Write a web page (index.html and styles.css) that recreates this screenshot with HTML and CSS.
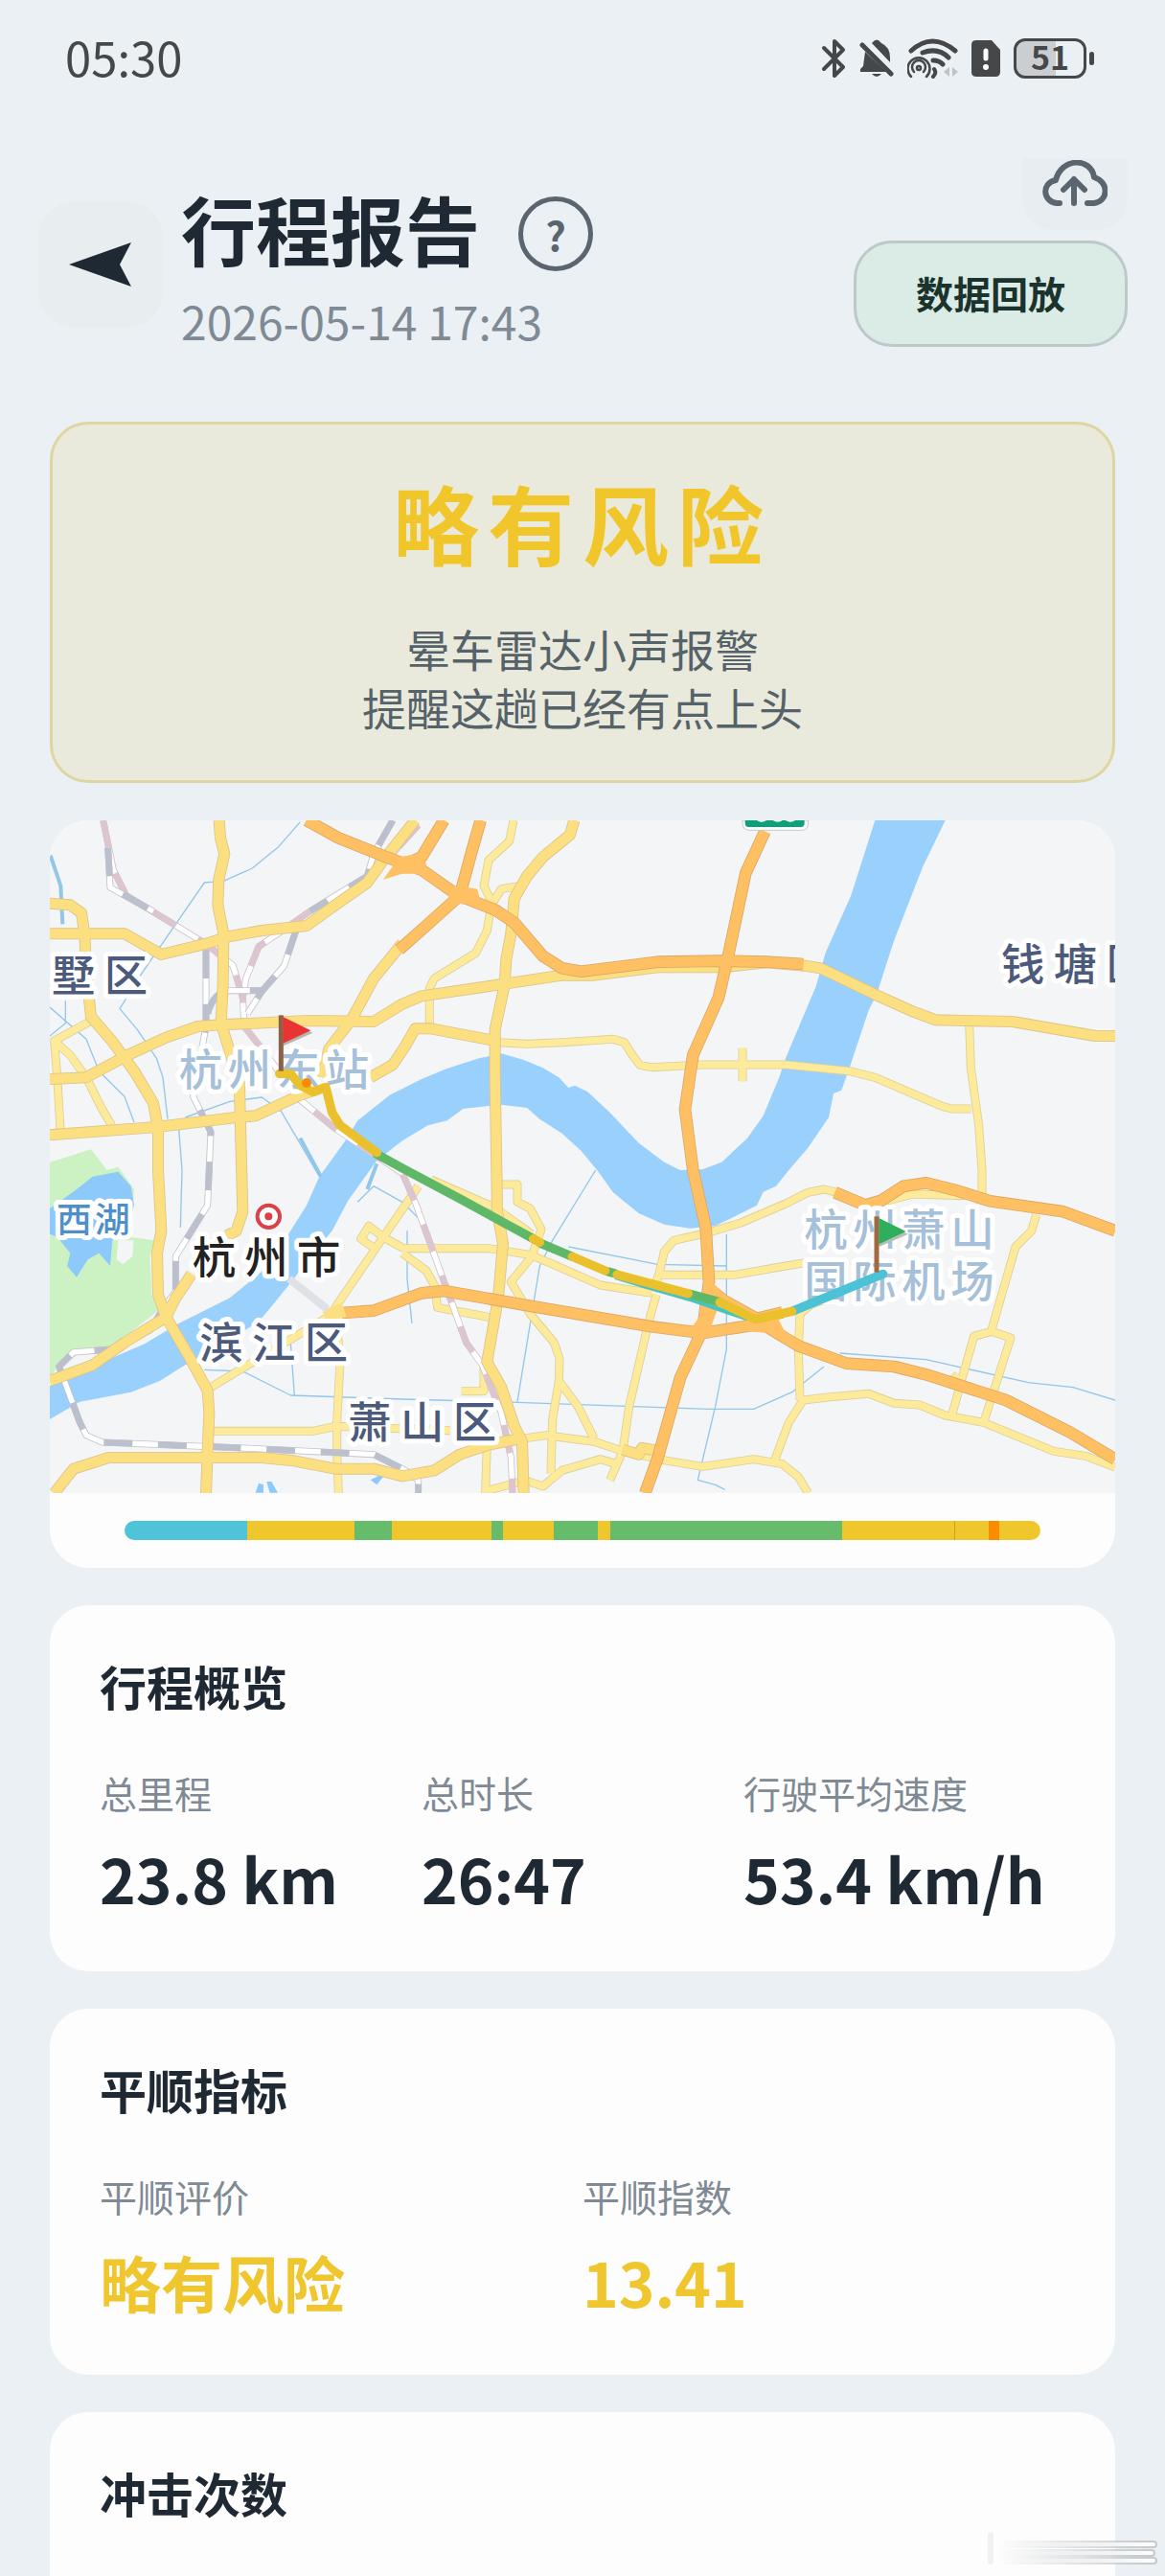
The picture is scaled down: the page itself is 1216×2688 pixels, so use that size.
FILE: index.html
```html
<!DOCTYPE html>
<html lang="zh-CN">
<head>
<meta charset="utf-8">
<meta name="viewport" content="width=device-width, initial-scale=1">
<title>行程报告</title>
<link rel="stylesheet" href="styles.css">
</head>
<body>
<div class="status">
  <span class="status-time">05:30</span>
  <div class="status-icons">
    <svg width="26" height="42" viewBox="0 0 26 42" fill="none" stroke="#454749" stroke-width="4" stroke-linecap="round" stroke-linejoin="round"><path d="M3 10 23 30 14 39V3L23 12 3 32"/></svg>
    <svg width="36" height="42" viewBox="0 0 36 42"><path fill="#454749" d="M13 5 Q18-2 23 5 Q32 9 32 20V25ZM6 14 28 35H1V32L4 29ZM13 37H23Q18 43 13 37Z"/><path d="M3 7 33 37" stroke="#454749" stroke-width="5" stroke-linecap="round"/></svg>
    <svg width="53" height="42" viewBox="0 0 53 42" fill="none" stroke="#454749" stroke-width="5" stroke-linecap="round"><path d="M4 13Q26-7 50 13M16 15Q32 9 43 20M27 23Q33 23 37 27"/><path d="M28 32Q31 36 27 40" stroke-width="4"/><g stroke-width="2.5"><path d="M4 40A11.500 11.500 0 1 1 20 40M7 35A7 7 0 1 1 17 35"/><circle cx="12" cy="31" r="2"/></g><path d="M44 30V40L38 35ZM47 30V40L53 35Z" fill="#bfc3c6" stroke="none"/></svg>
    <svg width="30" height="40" viewBox="0 0 30 40"><path fill="#454749" d="M5 1H21L30 11V34Q30 39 25 39H5Q0 39 0 34V6Q0 1 5 1Z"/><path d="M15 12V20" stroke="#fff" stroke-width="5" stroke-linecap="round"/><circle cx="15" cy="29" r="3" fill="#fff"/></svg>
    <span class="battery"><span class="battery-body">51</span><span class="battery-cap"></span></span>
  </div>
</div>

<header class="header">
  <div class="header-main">
    <button class="back" type="button" aria-label="返回"><svg width="66" height="46" viewBox="0 0 66 46"><path fill="#1f2933" d="M0 23 65 0 53 23 65 46Z"/></svg></button>
    <div class="heading">
      <div class="heading-row">
        <h1>行程报告</h1>
        <button class="help" type="button">?</button>
      </div>
      <time class="date">2026-05-14 17:43</time>
    </div>
  </div>
  <div class="actions">
    <button class="upload" type="button" aria-label="上传"><svg width="68" height="48" viewBox="0 0 68 48" fill="none" stroke="#5a6570" stroke-width="6" stroke-linecap="round" stroke-linejoin="round"><path d="M18 45H15C0 43-1 24 14 21 20-3 51-3 54 18 70 23 69 43 54 45H47M33 45V20M22 31 33 20 44 31"/></svg></button>
    <button class="replay" type="button">数据回放</button>
  </div>
</header>

<main class="content">
  <section class="risk">
    <h2>略有风险</h2>
    <p>晕车雷达小声报警<br>提醒这趟已经有点上头</p>
  </section>

  <section class="trip">
    <svg class="map" viewBox="36 45 3336 2106" role="img" aria-label="行程地图">
      <defs>
        <g id="minor">
          <path d="M1488 45 1475 110 1410 170 1395 250 1420 300 1405 390 1370 460 1240 540 1225 570V690M1510 250 1450 260 1425 300M1440 740 1530 745 1640 740 1800 730 1835 740 1860 780 1885 812 1920 818 2080 810H2340L2540 830 2620 850 2830 940 2860 948H2920M2205 758V862M2915 680 2920 820 2945 1000 2955 1140V1220"/>
          <path d="M170 670 50 735 60 860 70 1030M55 740 100 780 150 850 200 950 230 1000M1190 1190 1080 1350 930 1570 945 1740 935 1930V2020L940 2151M1145 1385 1080 1350 1035 1315 1010 1355 1060 1390M1145 1385H1410L1540 1405 1600 1430 1760 1500 1920 1525M1140 1400 1215 1455 1240 1500 1250 1570 1410 1600"/>
          <path d="M1450 1185H1500V1240L1540 1260 1575 1325 1545 1410 1480 1490 1540 1590 1615 1680 1632 1730 1630 1800 1610 1920 1605 2090M1630 1800 1690 1880 1740 1980M1230 1170 1425 1255 1545 1340M1935 1530 1910 1620 1850 1880 1830 2020 1790 2110"/>
          <path d="M1925 1520 1945 1460 1960 1395 1990 1360 2100 1335 2200 1305 2340 1245 2410 1210 2460 1200 2500 1210M1950 1468H2180L2340 1440 2400 1430M1520 1980 1590 1970 1740 1990 1830 2020 1970 2050 2080 2068 2240 2045 2330 2060 2380 2100 2410 2151M1520 2110 1580 2130 1640 2080 1760 2045 1810 2060"/>
          <path d="M2305 2050 2350 1930 2395 1860 2480 1850 2600 1840 2680 1870 2760 1875 2840 1908 2960 1930 3180 2020 3280 2035 3372 2070M2385 1860 2380 1700 2385 1590 2420 1560 2480 1540M3125 1280 3110 1330 3060 1380 2985 1640M2860 1910 2890 1800 2930 1660 2985 1645 3045 1665 2960 1930M2860 1800 2880 1780M2640 1240 2740 1215 2900 1220"/>
          <path d="M545 1957H860L930 1942 1290 1955M540 1820 790 1670 940 1580M1395 1760V1832H1325M1405 2000 1400 2145 1510 2115"/>
        </g>
        <g id="main">
          <path d="M566 45 570 100 583 150 565 230 562 310 580 400 578 560 572 680 600 770 630 870 632 970 640 1270 620 1330 590 1345M36 400H270L385 465 530 430 590 410 700 390 840 375 930 310 1030 240 1080 170 1180 45"/>
          <path d="M36 305 100 310 135 335 145 400 150 520 165 660 230 735 300 830 360 930 375 1010 375 1140 385 1330 372 1400 375 1530 400 1600 470 1720 530 1830 535 1900 530 2020 525 2151"/>
          <path d="M36 855 150 850 280 780 400 725 500 690 570 685 850 672 1050 675 1140 620 1200 595 1460 557 1640 530H1740L1940 505H2140L2280 490 2400 500 2450 508 2620 590 2730 640 2810 670 3050 675 3310 720H3372"/>
          <path d="M1140 430 1050 540 980 670 910 760 890 850M36 1030 370 1005 620 975 680 970 820 905 880 885M1040 850 1110 810 1150 750 1180 697 1230 697 1430 735M1678 45 1665 90 1580 160 1530 220 1490 290 1480 400 1465 480 1460 560 1430 700 1430 850 1435 1140 1437 1270 1455 1370 1440 1540 1405 1740 1450 1820 1490 1940 1515 1990 1520 2151"/>
          <path d="M50 2151 110 2075 220 2040 700 2040 800 2050 930 2075 1050 2075 1140 2098 1240 2080 1320 2030 1410 2000 1510 1980M36 1800 170 1750 270 1680 400 1600 430 1540 480 1465M1830 2015 1880 2030 1890 2010 1950 2020"/>
        </g>
        <g id="highway">
          <path d="M840 45 940 100 1090 160 1170 190 1200 200 1300 270 1340 290 1430 325 1490 365 1580 470 1640 508 1700 518 1940 488 2140 485 2280 488 2395 495M1270 45 1200 160 1120 195M1385 45 1355 150 1320 280 1220 370 1130 450"/>
          <path d="M2275 80 2215 210 2160 470 2130 600 2050 780 2025 950 2050 1140 2090 1320 2100 1490 2080 1640 2010 1790 1940 2040 1900 2151M950 1587 1050 1580 1200 1525 1270 1518 1540 1565 1920 1630 2080 1650 2240 1625 2280 1630 2380 1690 2530 1745 2680 1755 2780 1780 3030 1860 3230 1960 3372 2045"/>
          <path d="M2495 1210 2590 1250 2640 1235 2710 1190 2780 1180 2880 1205 2980 1237 3210 1270 3372 1330M2100 1510 2150 1550 2250 1605 2330 1585"/>
        </g>
        <g id="rail-a"><path d="M203 45 235 200 275 280 440 380 530 435 610 500 640 600 645 690 700 760 820 920 930 1010 1140 1150 1180 1240 1340 1680 1390 1750 1450 1900 1480 2040 1485 2151M1190 60 1090 170M850 330 750 400 690 440 650 540 640 600"/></g>
        <g id="rail-b"><path d="M218 130 225 255 360 330M525 450V690L485 910 540 1020 530 1250 430 1410 430 1520 400 1560 350 1640 240 1700 110 1710 65 1755 130 1930 150 1970 200 1992 640 2010 1050 2030 1150 2080 1190 2110V2151M1110 45 1050 150 1030 220 850 330M810 380 770 500 700 580 655 650M530 650Q550 580 600 578H700"/></g>
      </defs>
      <rect x="36" y="45" width="3336" height="2106" fill="#f4f5f7"/>
      <path fill="#ccf2c4" d="M36 1115 165 1075 215 1140 250 1130 300 1200 290 1350 365 1360 350 1410 355 1530 375 1580 240 1685 130 1715 60 1755 36 1790Z"/>
      <path fill="#8dc9fb" d="M36 1260 120 1200 170 1160 250 1145 290 1190 300 1250 260 1350 232 1360 225 1440 190 1400 155 1420 120 1475 90 1440 100 1400 60 1350 36 1340ZM680 2150 690 2120 705 2125V2150ZM715 2115 730 2115 750 2150H725ZM1040 2110 1070 2095 1080 2100 1060 2125Z"/>
      <path fill="#f4f5f7" d="M250 1360H298L295 1410 265 1435 245 1420Z"/>
      <path fill="#99d0fc" d="M2620 45 2545 280 2465 460 2435 565 2340 790 2320 850 2270 970 2220 1040 2140 1115 2080 1138 2010 1140 1960 1115 1880 1055 1790 960 1720 895 1680 875 1660 882 1630 850 1580 820 1520 795 1450 775 1380 790 1280 822 1200 855 1100 905 1000 985 960 1050 880 1160 840 1250 790 1330 720 1440 600 1540 440 1620 330 1685 190 1745 36 1815V1920L130 1865 290 1835 380 1800 460 1750 600 1670 690 1615 740 1555 800 1480 870 1390 920 1330 970 1235 1060 1110 1140 1048 1220 1000 1280 985 1330 948 1450 935 1530 945 1570 980 1640 1025 1700 1080 1750 1140 1800 1210 1880 1275 1960 1310 2040 1322 2120 1315 2190 1280 2250 1250 2270 1208 2310 1190 2350 1140 2410 1070 2475 975 2490 900 2515 890 2540 820 2580 700 2600 640 2625 590 2680 420 2750 240 2770 190 2840 45Z"/>
      <g class="streams">
        <path d="M820 50 750 130 670 195 580 235 520 240 430 370 320 530 255 635 310 700 370 790 390 850 405 980M85 610V680L36 720M36 630 150 730 190 830 270 910 300 990M440 1010 450 1140 445 1320M460 975 600 925 700 912 760 955 880 1160M1745 1140 1610 1360 1570 1440 1500 1865"/>
        <path d="M520 1765 640 1770 790 1845 1140 1857 1500 1867 2100 1888 2240 1888 2360 1835 2460 1755M2510 1713 2780 1733 3100 1805 3240 1820 3372 1860M2155 1340V1700L2120 1880 2065 2110 2120 2125 2150 2140M1660 1380 1940 1435 2155 1440M790 1680 802 1845M1155 1330V1480L1170 1620M1050 1190 1140 1240 1190 1290M1050 1190 1000 1240"/>
        <path class="wide" d="M38 155 70 250 76 370M1060 1120 1030 1200M820 1040 885 1160"/>
      </g>
      <g class="lines">
        <use href="#minor" stroke="#ddcf98" stroke-width="27"/><use href="#minor" stroke="#fdea9b" stroke-width="22"/>
        <use href="#rail-a" stroke="#cdc3cc" stroke-width="21"/><use href="#rail-a" stroke="#fff" stroke-width="16"/><use class="dashes" href="#rail-a" stroke="#dcc5ce" stroke-width="20"/>
        <use href="#rail-b" stroke="#c2c3cc" stroke-width="21"/><use href="#rail-b" stroke="#fff" stroke-width="16"/><use class="dashes" href="#rail-b" stroke="#bbc0cc" stroke-width="20"/>
        <use href="#main" stroke="#dcc388" stroke-width="36"/><use href="#main" stroke="#fcdf80" stroke-width="31"/>
        <use href="#highway" stroke="#d9a765" stroke-width="38"/><use href="#highway" stroke="#ffc063" stroke-width="33"/>
      </g>
      <path fill="#ffc063" d="M1080 230 1130 160 1190 150 1215 180 1205 212 1140 212ZM1290 250 1345 255 1375 260 1385 300 1330 308 1285 290ZM2085 1490 2112 1490 2145 1530 2125 1580 2105 1635 2040 1640 2070 1600ZM2215 1600 2310 1592 2345 1660 2290 1650 2215 1645Z"/>
      <path fill="#fcdf80" d="M890 1580 950 1555 965 1600 900 1610Z"/>
      <path stroke="#dfe1e6" stroke-width="24" d="M785 1480 905 1575"/>
      <path d="M2205 45H2410V58Q2408 76 2390 76H2228Q2208 76 2205 58Z" fill="#fff" stroke="#b9cdc8" stroke-width="3"/><path d="M2213 45H2399V54Q2399 66 2387 66H2225Q2213 66 2213 54Z" fill="#0da07a"/><path d="M2250 45Q2265 56 2280 45M2300 45Q2315 56 2330 45M2340 45Q2355 56 2370 45" fill="#fff"/>

      <g class="place">
        <text class="district" x="42" y="583">墅区</text>
        <text class="hub" x="440" y="876">杭州东站</text>
        <text class="district" x="3015" y="545">钱塘区</text>
        <text class="lake" x="57" y="1336">西湖</text>
        <text class="city" x="482" y="1463">杭州市</text>
        <text class="district" x="505" y="1730">滨江区</text>
        <text class="district" x="970" y="1980">萧山区</text>
        <text class="hub" x="2398" y="1378">杭州萧山</text>
        <text class="hub" x="2398" y="1538">国际机场</text>
      </g>
      <circle cx="721" cy="1285" r="35" fill="#fff" stroke="#d9424a" stroke-width="12"/><circle cx="721" cy="1285" r="12" fill="#d9424a"/>

      <g class="route">
        <path stroke="#4bc3bb" stroke-width="14" d="M1810 1476 1900 1504 2040 1544 2215 1604"/>
        <path stroke="#4cc2d6" d="M2360 1582 2645 1465"/>
        <path stroke="#5fb868" d="M1060 1090 1140 1134 1330 1235 1550 1355M1575 1370 1670 1410M1785 1458 1805 1463M2040 1528 2130 1552"/>
        <path stroke="#eac12c" d="M755 838H790L820 875 860 895 900 880 920 960 945 1000 1060 1085M1550 1355 1570 1366M1672 1411 1775 1455M1812 1467 2035 1526M2134 1553 2245 1607 2360 1582"/>
      </g>
      <circle cx="840" cy="867" r="15" fill="#fb8c00"/>
      <path stroke="#8b6148" stroke-width="15" d="M760 655V830"/><path fill="#b9b3ae" d="M768 672 860 710 768 751Z"/><path fill="#ea3434" d="M766 660 853 703 766 743Z"/>
      <path stroke="#a2683f" stroke-width="15" d="M2625 1285V1460"/><path fill="#b3beb4" d="M2634 1302 2724 1340 2634 1379Z"/><path fill="#2fae5b" d="M2632 1290 2717 1332 2632 1372Z"/>
    </svg>
    <div class="timeline">
      <span class="calm" style="flex-grow:128"></span><span class="risky" style="flex-grow:112"></span><span class="good" style="flex-grow:39"></span><span class="risky" style="flex-grow:104"></span><span class="good" style="flex-grow:12"></span><span class="risky" style="flex-grow:53"></span><span class="good" style="flex-grow:46"></span><span class="risky" style="flex-grow:13"></span><span class="good" style="flex-grow:242"></span><span class="risky" style="flex-grow:117"></span><span class="mark" style="flex-grow:1"></span><span class="risky" style="flex-grow:35"></span><span class="bad" style="flex-grow:11"></span><span class="risky" style="flex-grow:43"></span>
    </div>
  </section>

  <section class="card">
    <h2>行程概览</h2>
    <dl class="stats">
      <div><dt>总里程</dt><dd>23.8 km</dd></div>
      <div><dt>总时长</dt><dd>26:47</dd></div>
      <div><dt>行驶平均速度</dt><dd>53.4 km/h</dd></div>
    </dl>
  </section>

  <section class="card">
    <h2>平顺指标</h2>
    <dl class="stats accent">
      <div><dt>平顺评价</dt><dd>略有风险</dd></div>
      <div><dt>平顺指数</dt><dd>13.41</dd></div>
    </dl>
  </section>

  <section class="card last">
    <h2>冲击次数</h2>
  </section>
</main>

<svg class="smear" width="220" height="50" viewBox="0 0 220 50" aria-hidden="true">
  <defs>
    <linearGradient id="fade"><stop offset="0" stop-color="#c4c8cb" stop-opacity="0"/><stop offset="1" stop-color="#c4c8cb"/></linearGradient>
    <linearGradient id="glow"><stop offset="0" stop-color="#fff" stop-opacity="0"/><stop offset="1" stop-color="#fff"/></linearGradient>
  </defs>
  <rect x="39" y="6" width="6" height="34" rx="3" fill="#f0f1f2"/>
  <rect x="50" y="15" width="166" height="8" rx="4" fill="url(#fade)"/><rect x="50" y="24" width="164" height="8" rx="4" fill="url(#fade)"/><rect x="50" y="32" width="166" height="8" rx="4" fill="url(#fade)"/>
  <rect x="50" y="17" width="164" height="4" rx="2" fill="url(#glow)"/><rect x="50" y="26" width="162" height="4" rx="2" fill="url(#glow)"/><rect x="50" y="34" width="164" height="4" rx="2" fill="url(#glow)"/>
</svg>
</body>
</html>
```
FILE: styles.css
```css
* { box-sizing: border-box; }
body {
  margin: 0;
  background: #eaf0f4;
  color: #1f2933;
  font-family: "Noto Sans CJK SC", "Noto Sans", sans-serif;
}
h1, h2, p, dl, dd { margin: 0; }
button { font-family: inherit; padding: 0; border: 0; }
svg { display: block; }

.status {
  display: flex;
  align-items: center;
  justify-content: space-between;
  height: 125px;
  padding: 0 74px 4px 68px;
  color: #454749;
}
.status-time { margin-bottom: 4px; font-size: 49px; line-height: 64px; }
.status-icons { display: flex; align-items: center; gap: 14px; }
.battery { display: flex; align-items: center; gap: 3px; }
.battery-body {
  width: 76px;
  height: 42px;
  border: 3px solid #454749;
  border-radius: 12px;
  background: linear-gradient(90deg, #caced1 58%, transparent 58%);
  font-size: 34px;
  font-weight: 700;
  line-height: 32px;
  text-align: center;
}
.battery-cap { width: 5px; height: 14px; border-radius: 3px; background: #454749; }

.header {
  display: flex;
  justify-content: space-between;
  align-items: flex-start;
  padding: 40px 39px 78px 40px;
}
.header-main { display: flex; align-items: center; gap: 19px; margin-top: 28px; }
.back {
  display: flex;
  align-items: center;
  justify-content: center;
  width: 130px;
  height: 130px;
  border-radius: 36px;
  background: #e8edf0;
}
.heading-row { display: flex; align-items: flex-end; gap: 40px; margin-bottom: 26px; }
h1 { font-size: 78px; line-height: 90px; }
.help {
  width: 78px;
  height: 78px;
  border: 5px solid #5a6570;
  border-radius: 50%;
  background: none;
  color: #5a6570;
  font-size: 42px;
  font-weight: 700;
  line-height: 60px;
}
.date { display: block; color: #7f8a95; font-size: 48px; line-height: 50px; }
.actions { display: flex; flex-direction: column; align-items: flex-end; gap: 11px; }
.upload {
  display: flex;
  justify-content: center;
  width: 110px;
  height: 75px;
  padding-top: 2px;
  border-radius: 0 0 32px 32px;
  background: #e8edf1;
}
.replay {
  width: 286px;
  height: 111px;
  padding-bottom: 4px;
  border: 3px solid #bdc9c9;
  border-radius: 40px;
  background: #dbebe5;
  color: #1a332d;
  font-size: 39px;
  font-weight: 700;
}

.content { display: flex; flex-direction: column; gap: 39px; padding: 0 52px; }
.risk {
  padding: 42px 40px 46px;
  border: 3px solid #dfd5a2;
  border-radius: 40px;
  background: #e9eadb;
  text-align: center;
}
.risk h2 {
  margin-bottom: 43px;
  color: #f1c62b;
  font-size: 90px;
  line-height: 118px;
  letter-spacing: 9px;
}
.risk p { color: #55626a; font-size: 46px; line-height: 61px; }

.trip { border-radius: 40px; background: #fdfdfd; overflow: hidden; }
.map { width: 100%; height: auto; }
.lines, .streams, .route { fill: none; stroke-linejoin: round; }
.lines .dashes { stroke-dasharray: 90 80; }
.streams { stroke: #93c7ea; stroke-width: 4; }
.streams .wide { stroke-width: 12; }
.route { stroke-width: 28; stroke-linecap: round; }
.place text {
  font-size: 136px;
  font-weight: 500;
  letter-spacing: 28px;
  paint-order: stroke;
  stroke: #fff;
  stroke-width: 30px;
  stroke-linejoin: round;
}
.place .district { fill: #4c5a7c; }
.place .city { fill: #222; }
.place .hub { fill: #a6c0da; letter-spacing: 17px; }
.place .lake { fill: #4f8fc9; font-size: 110px; letter-spacing: 10px; }
.timeline {
  display: flex;
  height: 20px;
  margin: 29px 78px;
  border-radius: 10px;
  overflow: hidden;
}
.timeline span { flex-basis: 0; }
.calm { background: #4fc3d7; }
.risky { background: #f0c62d; }
.good { background: #66bc6b; }
.bad { background: #fb8c00; }
.mark { background: #c9a016; }

.card { padding: 50px 52px 58px; border-radius: 40px; background: #fdfdfd; }
.card h2 { font-size: 49px; line-height: 68px; }
.stats { display: grid; grid-auto-flow: column; grid-auto-columns: 1fr; margin-top: 50px; }
.stats dt { margin-bottom: 22px; color: #7f8a95; font-size: 39px; line-height: 54px; }
.stats dd { font-size: 64px; font-weight: 700; line-height: 80px; white-space: nowrap; }
.accent dd { color: #efc62e; }
.card.last { border-radius: 40px 40px 0 0; }

.smear { position: fixed; right: 4px; bottom: 2px; }
```
